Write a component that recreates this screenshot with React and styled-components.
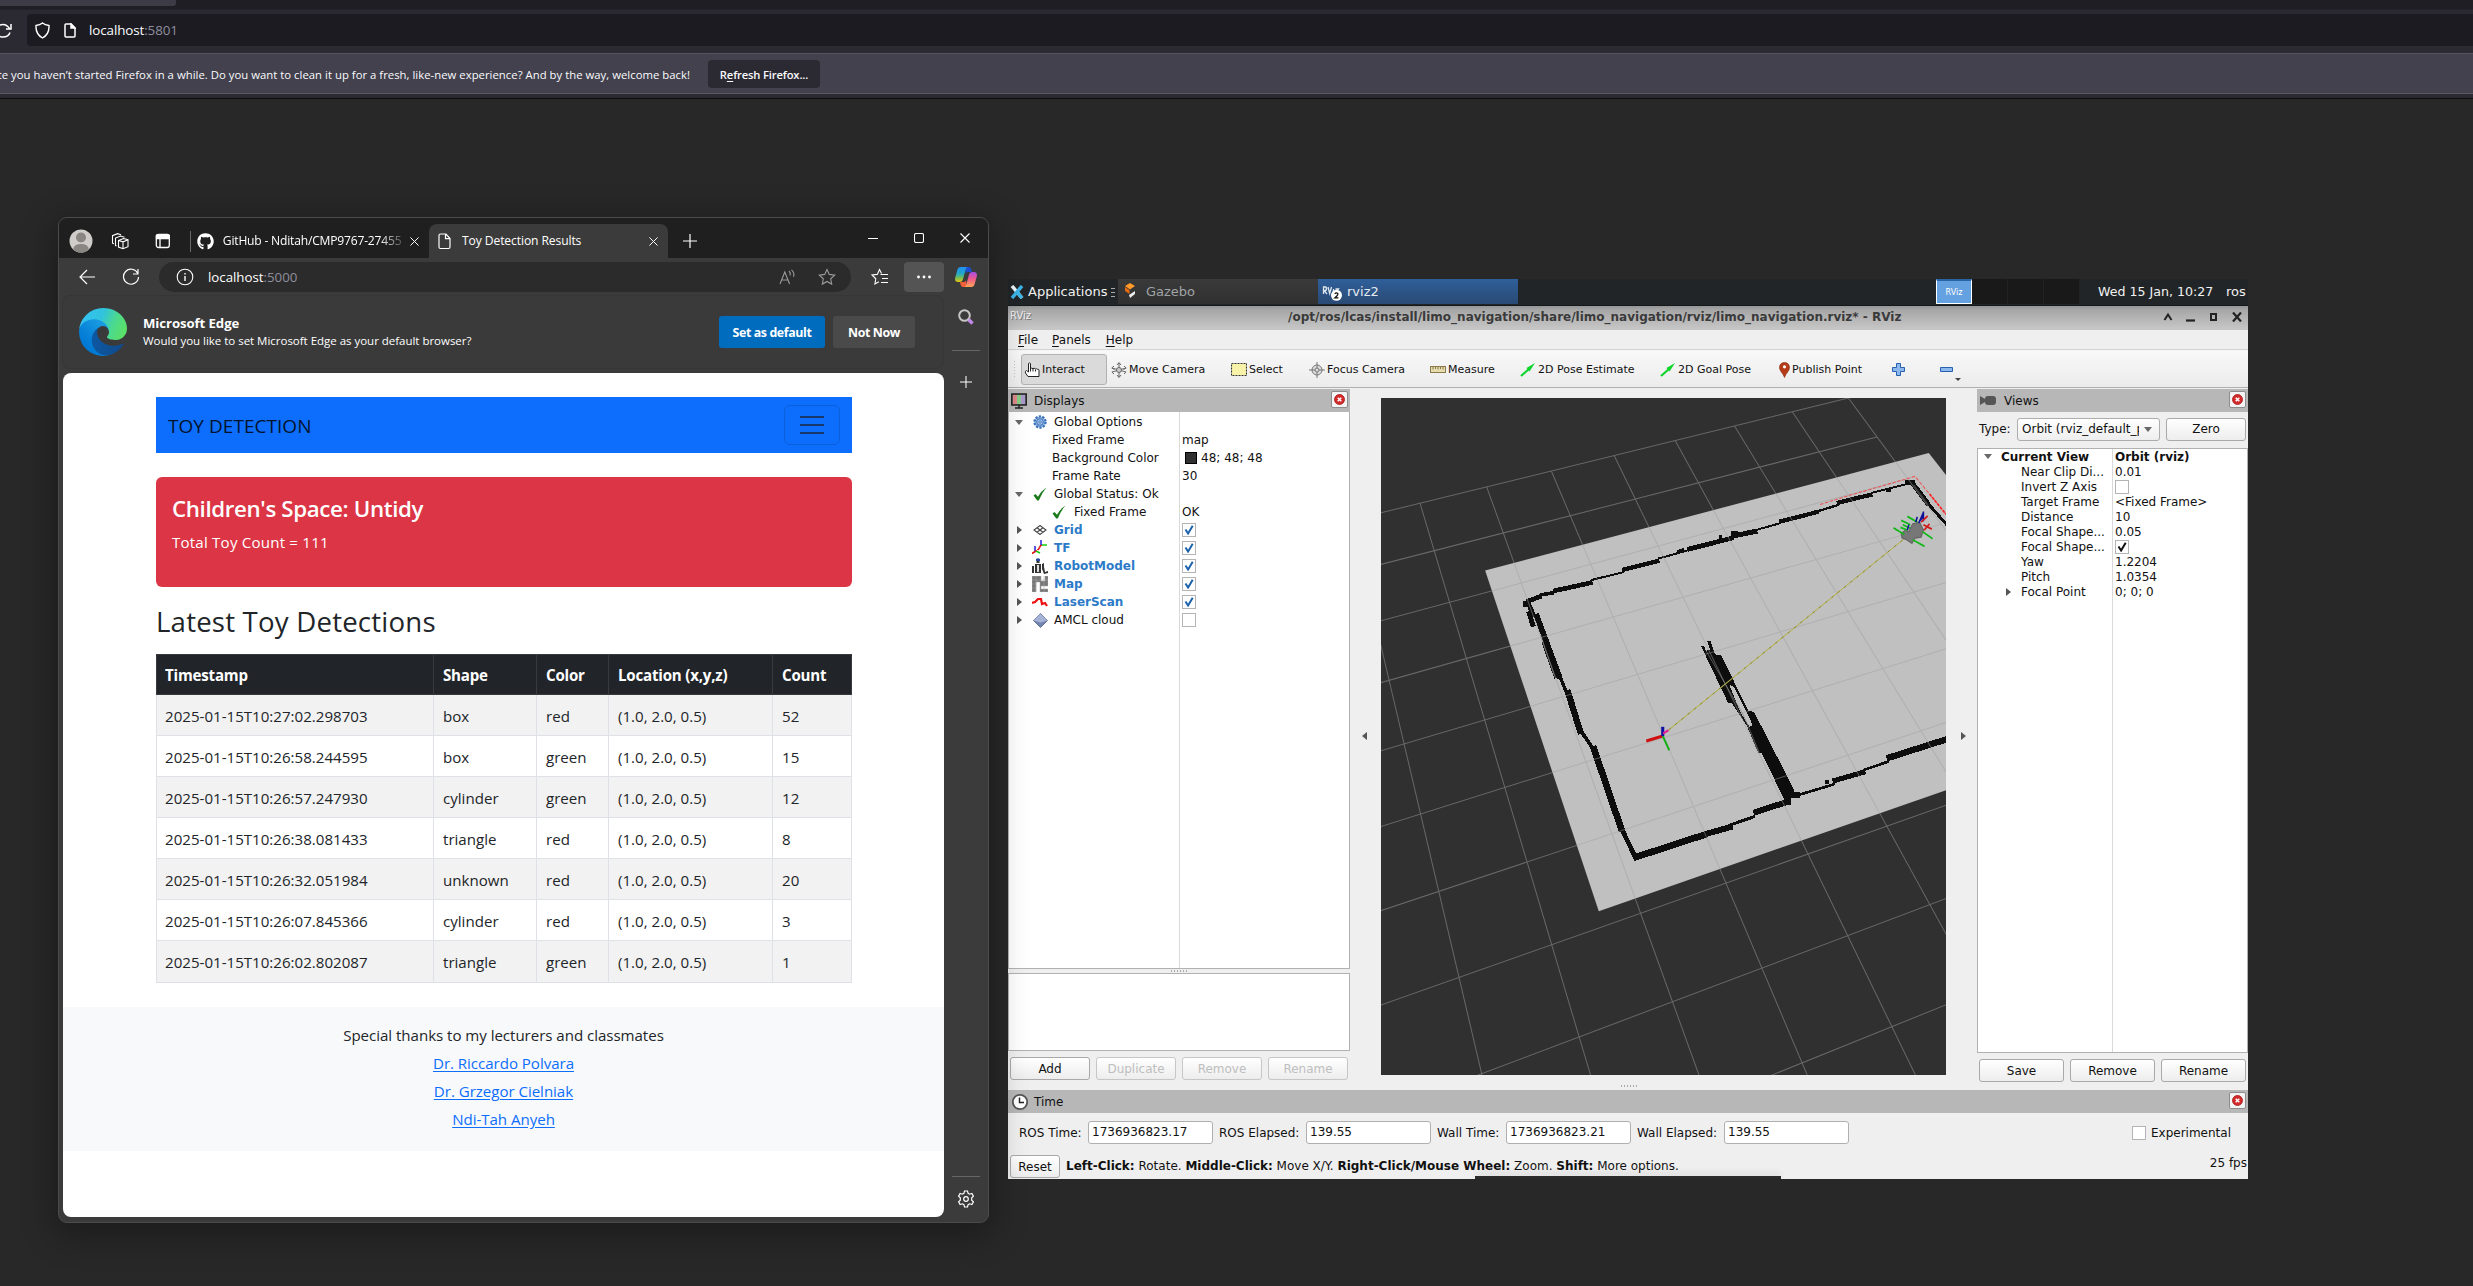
import React from "react";
import styled, { createGlobalStyle, css } from "styled-components";
import { FaGithub } from "react-icons/fa";

const UI = `"Open Sans", "Noto Sans", sans-serif`;
const DJV = `"DejaVu Sans", sans-serif`;

const Global = createGlobalStyle`
  * { box-sizing: border-box; }
  html, body { margin: 0; background: #282828; overflow: hidden; }
  body { font-family: ${UI}; }
  svg { display: block; flex: none; }
`;

/* ---------- Outer browser ---------- */
const Shell = styled.div`
  width: 2473px; height: 1286px; display: flex; flex-direction: column;
  background: #282828; overflow: hidden;
`;
const TabStrip = styled.div`
  height: 10px; flex: none; background: #1f1e25; border-bottom: 1px solid #24232b;
`;
const TabStub = styled.div`
  width: 176px; height: 6px; background: #3c3b46; border-radius: 0 0 3px 0;
`;
const FxBar = styled.div`
  height: 44px; flex: none; background: #2b2a33; border-bottom: 1px solid #55535f;
  display: flex; align-items: flex-start; padding-top: 4px;
`;
const FxReload = styled.div`width: 27px; padding-top: 9px;`;
const FxUrl = styled.div`
  flex: 1; height: 32px; background: #1c1b22; border-radius: 4px 0 0 4px;
  display: flex; align-items: center; padding-left: 8px; gap: 14px; color: #fbfbfe;
  font-size: 13.4px;
`;
const FxAddress = styled.span`margin-left: -1px; letter-spacing: -0.1px;`;
const Dim = styled.span`color: ${p => p.c || "#8f8f9d"};`;
const Notice = styled.div`
  height: 40px; flex: none; background: #42414d; border-bottom: 1px solid #5b5966;
  display: flex; align-items: center; color: #fbfbfe; font-size: 11.3px;
`;
const NoticeText = styled.div`
  width: 690px; display: flex; justify-content: flex-end; white-space: nowrap; margin-right: 18px;
  padding-top: 1px; letter-spacing: 0.03px;
`;
const NoticeButton = styled.div`
  width: 112px; height: 28px; border-radius: 4px; background: #2b2a33; font-weight: 600;
  display: flex; align-items: center; justify-content: center; font-size: 11.2px; white-space: pre;
  letter-spacing: -0.15px; padding-top: 1px;
`;
const Seam = styled.div`height: 5px; flex: none; background: #2b2a33; border-bottom: 1px solid #0c0c0d;`;
const Desktop = styled.div`position: relative; flex: 1;`;

/* ---------- Edge window ---------- */
const EdgeWin = styled.div`
  position: absolute; left: 58px; top: 118px; width: 931px; height: 1006px; z-index: 2;
  border: 1px solid #4b4b4b; border-radius: 9px; background: #3b3b3b; overflow: hidden;
  display: flex; flex-direction: column; color: #fff;
`;
const EdgeShadow = styled.div`
  position: absolute; left: 58px; top: 118px; width: 931px; height: 1006px; z-index: 1;
  border-radius: 9px; box-shadow: 0 8px 34px 4px rgba(0, 0, 0, 0.32);
`;
const EdgeTitle = styled.div`height: 40px; flex: none; background: #1f1f1f; display: flex; align-items: flex-end;`;
const EdgeTools = styled.div`
  width: 131px; height: 100%; display: flex; align-items: center; padding: 6px 0 0 10px; gap: 18px;
`;
const Layout = styled.div`margin-left: 8px;`;
const VRule = styled.div`width: 1px; height: 21px; background: #6a6a6a; margin-bottom: 6px;`;
const EdgeTab = styled.div`
  width: ${p => p.w}px; height: 34px; display: flex; align-items: center; padding-left: ${p => p.pl}px;
  gap: ${p => p.gap}px; font-size: 12.1px; white-space: nowrap;
  ${p => p.$active && css`background: #3b3b3b; border-radius: 8px 8px 0 0;`}
`;
const TabText = styled.div`
  width: ${p => p.w}px; overflow: hidden; letter-spacing: ${p => p.ls || 0}px; padding-bottom: 1px;
  ${p => p.$fade && css`mask-image: linear-gradient(90deg, #000 88%, rgba(0,0,0,0.25));`}
`;
const NewTab = styled.div`width: 182px; height: 34px; display: flex; align-items: center; padding-left: 15px;`;
const WinButtons = styled.div`height: 40px; display: flex; align-items: center;`;
const WinButton = styled.div`width: 46px; display: flex; justify-content: center;`;
const EdgeBar = styled.div`height: 37px; flex: none; display: flex; align-items: center;`;
const BarIcon = styled.div`width: ${p => p.w}px; padding-left: ${p => p.pl || 0}px; display: flex; justify-content: center; flex: none;`;
const EdgeUrl = styled.div`
  width: 693px; height: 30px; border-radius: 15px; background: #2b2b2b; display: flex; align-items: center;
  padding: 0 14px 0 17px; font-size: 13.3px;
`;
const UrlText = styled.div`flex: 1; padding-left: 14px; letter-spacing: -0.02px;`;
const MenuBtn = styled.div`
  width: 40px; height: 30px; border-radius: 4px; background: #545454;
  display: flex; align-items: center; justify-content: center;
`;
const EdgeMain = styled.div`flex: 1; display: flex; min-height: 0;`;
const EdgeLeft = styled.div`width: 885px; padding: 0 0 5px 4px; display: flex; flex-direction: column;`;
const EdgeSide = styled.div`
  flex: 1; display: flex; flex-direction: column; align-items: center; padding: 13px 0 14px;
`;
const SideRule = styled.div`width: 28px; height: 1px; background: #666; margin: ${p => p.m};`;
const Spacer = styled.div`flex: 1;`;
const InfoBar = styled.div`
  height: 74px; flex: none; margin: 0 0 4px -1px; border: 1px solid #363636; border-radius: 8px; background: #3a3a3a;
  display: flex; align-items: center; padding-left: 16px;
`;
const InfoText = styled.div`width: 592px; padding-left: 16px; font-size: 11.5px; line-height: 17px; letter-spacing: -0.02px;`;
const InfoTitle = styled.div`font-size: 13.2px; font-weight: 700; letter-spacing: -0.08px;`;
const InfoButton = styled.div`
  width: ${p => p.w}px; height: 32px; border-radius: 3px; background: ${p => p.bg}; font-size: 12.4px; font-weight: 700;
  display: flex; align-items: center; justify-content: center; margin-right: 8px; letter-spacing: -0.4px;
`;

/* ---------- Toy page ---------- */
const Page = styled.div`flex: 1; background: #fff; border-radius: 8px; color: #212529; font-size: 15.1px; padding-top: 24px; overflow: hidden;`;
const Container = styled.div`width: 696px; margin-left: 93px;`;
const Nav = styled.div`
  height: 56px; background: #0d6efd; display: flex; align-items: center; justify-content: space-between;
  padding: 0 12px; font-size: 19px; color: #03142e;
`;
const Brand = styled.span`padding-top: 1px; letter-spacing: 0.04px;`;
const Toggler = styled.div`
  width: 56px; height: 40px; border: 1px solid #0c5fdb; border-radius: 6px; display: flex;
  flex-direction: column; align-items: center; justify-content: center; gap: 6px;
`;
const Bar = styled.div`width: 24px; height: 2px; background: #17386b;`;
const Alert = styled.div`
  margin-top: 24px; height: 110px; border-radius: 6px; background: #dc3545; color: #fff; padding: 16px;
`;
const AlertTitle = styled.div`font-size: 22.3px; font-weight: 600; line-height: 30px; letter-spacing: -0.36px; padding-top: 1px;`;
const AlertText = styled.div`line-height: 24px; margin-top: 6px; letter-spacing: 0.2px;`;
const H3 = styled.div`margin: 17px 0 16px; font-size: 27.6px; font-weight: 500; line-height: 34px; letter-spacing: 0.2px;`;
const Table = styled.div`border: 1px solid #dee2e6; border-top: 0;`;
const TR = styled.div`
  display: grid; grid-template-columns: 277px 103px 72px 164px 1fr; height: 41px;
  background: ${p => (p.$odd ? "#f2f2f2" : "#fff")}; border-bottom: 1px solid #dee2e6;
  &:last-child { border-bottom: 0; }
  ${p => p.$head && css`
    background: #212529; color: #fff; font-weight: 700; margin: 0 -1px; height: 41px;
    border: 1px solid #373b3e; letter-spacing: -0.2px;
  `}
`;
const TD = styled.div`
  padding: ${p => (p.$head ? 0 : 1)}px 8px 0; display: flex; align-items: center;
  border-right: 1px solid ${p => (p.$head ? "#373b3e" : "#dee2e6")};
  & + & { padding-left: 9px; }
  &:last-child { border-right: 0; }
`;
const Footer = styled.div`
  margin-top: 24px; height: 144px; background: #f8f9fa; padding-top: 14px; display: flex; flex-direction: column;
  align-items: center; line-height: 28px; letter-spacing: -0.04px;
`;
const Link = styled.a`color: #0d6efd; text-decoration: underline; text-underline-offset: 2px;`;

/* ---------- RViz ---------- */
const Remote = styled.div`
  position: absolute; left: 1008px; top: 180px; width: 1240px; height: 900px; background: #efefef;
  display: flex; flex-direction: column; font-family: ${DJV}; font-size: 12px; color: #111; overflow: hidden;
`;
const TaskBar = styled.div`
  height: 27px; flex: none; background: #212527; display: flex; color: #f2f2f2; font-size: 13px; align-items: center;
  border-bottom: 1px solid #15191a; white-space: nowrap; padding-bottom: 1px;
`;
const AppMenu = styled.div`width: 110px; display: flex; align-items: center; padding-left: 2px; gap: 4px;`;
const Task = styled.div`
  width: 200px; height: 25px; display: flex; align-items: center; padding: 0 0 1px ${p => p.pl}px; gap: ${p => p.gap}px;
  color: ${p => p.c}; background: ${p => p.bg};
`;
const Pager = styled.div`margin-left: 418px; display: flex; height: 25px; background: #191919;`;
const Desk = styled.div`
  width: 36px; border-right: 1px solid #222; color: #fff; font-size: 8px; display: flex; align-items: center; justify-content: center;
  ${p => p.$on && css`background: #64a1e0; border: 1px solid #fff; border-top: 2px solid #2a63a8;`}
`;
const Clock = styled.div`width: 128px; margin-left: 18px; font-size: 12.6px;`;
const TitleBar = styled.div`
  height: 24px; flex: none; background: linear-gradient(#969696, #a6a6a6 15%, #c8c8c8); display: flex; align-items: center;
  font-weight: 700; color: #3a3a3a; padding: 0 6px 6px 2px; white-space: nowrap;
`;
const TitleText = styled.div`flex: 1; padding-left: 257px; padding-top: 3px;`;
const TitleIcon = styled.div`font-weight: 400; font-size: 10px; color: #eee; width: 21px; text-shadow: 1px 1px 0 #777;`;
const WinGlyphs = styled.div`display: flex; gap: 13px; padding-top: 3px;`;
const MenuBar = styled.div`
  height: 20px; flex: none; display: flex; gap: 14px; padding-left: 10px; align-items: center; border-bottom: 1px solid #d2d2d2;
`;
const MenuItem = styled.span`&:nth-child(3) { margin-left: 1px; }`;
const U = styled.span`text-decoration: underline; text-underline-offset: 2px;`;
const ToolBar = styled.div`
  height: 38px; flex: none; background: linear-gradient(#f8f8f8, #ececec); border-bottom: 1px solid #b0b0b0;
  display: flex; align-items: center; font-size: 11px; padding: 2px 0 0 5px;
`;
const Grip = styled.div`
  width: 8px; height: 17px; background: radial-gradient(circle, #c0c0c0 0.8px, transparent 1px) 0 0 / 3px 3px;
  background-clip: content-box; padding-right: 4px; margin-bottom: 2px;
`;
const Tool = styled.div`
  width: ${p => p.w}px; height: 31px; display: flex; align-items: ${p => (p.$low ? "flex-end" : "center")}; gap: 2px;
  padding: 0 0 ${p => (p.$low ? 4 : 0)}px 3px; white-space: nowrap;
  ${p => p.$on && css`background: #dadada; border: 1px solid #b2b2b2; border-radius: 3px; padding-left: 2px; margin-right: 1px;`}
`;
const Work = styled.div`height: 702px; flex: none; display: flex; padding-top: 1px;`;
const Dock = styled.div`width: ${p => p.w}px; display: flex; flex-direction: column;`;
const DockHead = styled.div`
  height: 23px; flex: none; background: #b7b7b7; display: flex; align-items: center; padding: 0 2px 0 3px; gap: ${p => p.gap || 7}px;
`;
const CloseBox = styled.div`
  width: 17px; height: 17px; border: 1px solid #8d8d8d; border-radius: 2px; background: #f4f4f4; margin: 0 0 3px auto;
  display: flex; align-items: center; justify-content: center;
`;
const Tree = styled.div`
  height: ${p => p.h}px; flex: none; background: linear-gradient(90deg, #fff ${p => p.split}px, #d9d9d9 ${p => p.split}px, #d9d9d9 ${p => p.split + 1}px, #fff ${p => p.split + 1}px);
  border: 1px solid #b1b1b1; ${p => p.$notop && "border-top: 0; padding-top: 1px;"}
`;
const Row = styled.div`display: grid; grid-template-columns: ${p => p.split}px 1fr; height: ${p => p.h}px; align-items: center; white-space: nowrap;`;
const Name = styled.div`
  display: flex; align-items: center; padding-left: ${p => p.pl}px; overflow: hidden;
  ${p => p.$bold && css`font-weight: 700;`} ${p => p.$blue && css`color: #2c7ac8; font-weight: 700;`}
`;
const Slot = styled.div`width: ${p => p.w}px; display: flex; justify-content: center; flex: none;`;
const Value = styled.div`display: flex; align-items: center; padding-left: 3px; ${p => p.$bold && "font-weight: 700;"}`;
const Check = styled.div`
  width: 14px; height: 14px; border: 1px solid #b4b4b4; background: #fff; display: flex; align-items: center; justify-content: center;
`;
const Swatch = styled.div`width: 12px; height: 12px; border: 1px solid #000; background: #303030; margin: 0 4px 0 3px;`;
const Blank = styled.div`height: 78px; border: 1px solid #b1b1b1; background: #fff;`;
const Dots = styled.div`
  height: 4px; width: 18px; margin: ${p => p.m || "0 auto"};
  background: radial-gradient(circle, #aaa 0.8px, transparent 1px) 0 0 / 3px 4px;
`;
const Buttons = styled.div`display: flex; gap: ${p => p.gap}px; padding: ${p => p.p};`;
const Btn = styled.div`
  width: ${p => p.w}px; height: 23px; border: 1px solid ${p => (p.$off ? "#c6c6c6" : "#a9a9a9")}; border-radius: 3px;
  background: linear-gradient(#fff, #ededed); color: ${p => (p.$off ? "#bebebe" : "#111")}; margin-right: ${p => p.mr || 0}px;
  display: flex; align-items: center; justify-content: center; flex: none;
`;
const Gutter = styled.div`width: ${p => p.w}px; display: flex; align-items: center; justify-content: center; padding: ${p => p.p};`;
const View = styled.div`width: 565px; padding-top: 9px; & > svg { background: #303030; }`;
const TypeRow = styled.div`height: 36px; display: flex; align-items: center; padding: 0 0 2px 2px;`;
const Combo = styled.div`
  width: 143px; height: 23px; border: 1px solid #adadad; border-radius: 3px; background: linear-gradient(#fff, #eee);
  display: flex; align-items: center; justify-content: space-between; padding: 0 7px 0 4px; margin: 0 6px 0 auto;
`;
const ComboText = styled.div`width: 117px; overflow: hidden; white-space: nowrap;`;
const TimeRow = styled.div`height: 40px; display: flex; align-items: center; padding: 0 17px 2px 11px; white-space: nowrap;`;
const Label = styled.div`width: ${p => p.w}px; padding-top: 2px;`;
const Field = styled.div`
  width: 125px; height: 23px; margin-right: 6px; border: 1px solid #b0b0b0; border-radius: 3px; background: #fff;
  display: flex; align-items: center; padding: 0 3px 1px;
`;
const Exp = styled.div`margin-left: auto; display: flex; align-items: center; gap: 5px; padding-top: 2px;`;
const StatusRow = styled.div`flex: 1; display: flex; align-items: flex-start; padding: 2px 1px 0 2px; white-space: nowrap;`;
const Hint = styled.div`flex: 1; padding: 4px 0 0 6px;`;
const Fps = styled.div`padding-top: 1px;`;
const Strip = styled.div`position: absolute; left: 467px; bottom: 0; width: 306px; height: 3px; background: #2a2a2a; box-shadow: 0 -3px 6px rgba(0,0,0,.12);`;

/* ---------- small drawings ---------- */
const Svg = ({ s = 16, w, h, vb, children, ...r }) => (
  <svg width={w || s} height={h || s} viewBox={vb || `0 0 ${w || s} ${h || s}`} fill="none" stroke="#fff" strokeWidth="1.1" {...r}>{children}</svg>
);
const XIcon = ({ s = 9, w = 1.1 }) => <Svg s={s} vb="0 0 10 10" strokeWidth={w}><path d="M.5.5l9 9M9.5.5l-9 9" /></Svg>;
const PlusIcon = ({ s = 14 }) => <Svg s={s} vb="0 0 14 14" strokeWidth="1.2"><path d="M7 0v14M0 7h14" /></Svg>;
const Down = () => <Svg w={8} h={5} stroke="none"><path d="M0 0h8L4 5z" fill="#686868" /></Svg>;
const Right = () => <Svg w={5} h={8} stroke="none"><path d="M0 0v8l5-4z" fill="#555" /></Svg>;
const Left = () => <Svg w={5} h={8} stroke="none"><path d="M5 0v8L0 4z" fill="#555" /></Svg>;
const Tick = ({ c = "#1c62ab" }) => <Svg s={10} stroke={c} strokeWidth="2"><path d="M1.5 4.5l2.6 4L8.7.8" /></Svg>;
const GreenTick = () => <Svg s={14} stroke="none" fill="#1b7a1b"><path d="M.500 8.500l2-1.500L5 9.800Q8 4 13.500 .500 9 5.500 5.800 13.500H4.200z" /></Svg>;
const Closer = () => (
  <CloseBox><Svg s={11} stroke="#fff" strokeWidth="1.5"><circle cx="5.5" cy="5.5" r="5" fill="#d42a2a" stroke="#a51515" strokeWidth=".8" /><path d="M3.7 3.7l3.6 3.6M7.3 3.7L3.7 7.3" /></Svg></CloseBox>
);
const EdgeLogo = () => (
  <svg width="48" height="48" viewBox="0 0 256 256">
    <defs>
      <linearGradient id="e1" x1="63" y1="178" x2="242" y2="178" gradientUnits="userSpaceOnUse"><stop stopColor="#0c59a4" /><stop offset="1" stopColor="#114a8b" /></linearGradient>
      <linearGradient id="e2" x1="157" y1="100" x2="46" y2="221" gradientUnits="userSpaceOnUse"><stop stopColor="#1b9de2" /><stop offset=".2" stopColor="#1595df" /><stop offset=".7" stopColor="#0680d7" /><stop offset="1" stopColor="#0078d4" /></linearGradient>
      <linearGradient id="e3" x1="20" y1="60" x2="240" y2="150" gradientUnits="userSpaceOnUse"><stop stopColor="#35c1f1" /><stop offset=".4" stopColor="#30c3dd" /><stop offset=".7" stopColor="#4bd990" /><stop offset="1" stopColor="#5be067" /></linearGradient>
    </defs>
    <g transform="translate(-4.63 -4.92)">
      <path fill="url(#e1)" d="M235.68 195.46a93.73 93.73 0 0 1-10.54 4.71 101.87 101.87 0 0 1-35.9 6.46c-47.32 0-88.54-32.55-88.54-74.32A31.48 31.48 0 0 1 117.13 105c-42.8 1.8-53.8 46.4-53.8 72.53 0 73.88 68.09 81.37 82.76 81.37 7.91 0 19.84-2.3 27-4.56l1.31-.44a128.34 128.34 0 0 0 66.6-52.8 4 4 0 0 0-5.32-5.64Z" />
      <path fill="url(#e2)" d="M110.34 246.34A79.2 79.2 0 0 1 87.6 225a80.72 80.72 0 0 1 29.53-120c3.12-1.47 8.45-4.13 15.54-4a32.35 32.35 0 0 1 25.69 13 31.88 31.88 0 0 1 6.36 18.66c0-.21 24.46-79.6-80-79.6-43.9 0-80 41.66-80 78.21a130.15 130.15 0 0 0 12.11 56 128 128 0 0 0 156.38 67.11 75.55 75.55 0 0 1-62.78-8Z" />
      <path fill="url(#e3)" d="M156.94 153.78c-.81 1.05-3.3 2.5-3.3 5.66 0 2.61 1.7 5.12 4.72 7.23 14.38 10 41.49 8.68 41.56 8.68a59.56 59.56 0 0 0 30.27-8.35 61.38 61.38 0 0 0 30.43-52.88c.26-22.41-8-37.31-11.34-43.91-21.19-41.44-66.92-65.28-116.65-65.28a128 128 0 0 0-128 126.2c.48-36.54 36.8-66.05 80-66.05 3.5 0 23.46.34 42 10.07 16.34 8.58 24.9 18.94 30.85 29.21 6.18 10.67 7.28 24.15 7.28 29.52s-2.74 13.33-7.8 19.9Z" />
    </g>
  </svg>
);
const Copilot = () => (
  <svg width="22" height="20" viewBox="0 0 22 20">
    <defs>
      <linearGradient id="c1" x1="0" y1="0" x2="0" y2="1"><stop stopColor="#1f8ff0" /><stop offset=".45" stopColor="#23a9c8" /><stop offset=".75" stopColor="#7cc04a" /><stop offset="1" stopColor="#f0c414" /></linearGradient>
      <linearGradient id="c2" x1="0" y1="0" x2="0" y2="1"><stop stopColor="#a44fe8" /><stop offset=".45" stopColor="#f0588e" /><stop offset="1" stopColor="#ffa654" /></linearGradient>
    </defs>
    <path fill="#1b4fd0" d="M10 0h3.4c1.6 0 2.4.8 2.8 2.2L17 5h-3.8c-1.2 0-1.9.6-2.3 1.8z" />
    <path fill="#f2603a" d="M12 20H8.200c-1.400 0-2.100-.8-2.500-2.200L5 15h3.800c1.200 0 1.800-.6 2.200-1.800z" />
    <path fill="url(#c1)" d="M5.600 0H13c-1.300.2-2 1.200-2.400 2.700L8 12.200C7.400 14 6.300 15 4.600 15H3C.700 15-.4 13.200.2 10.800L2.300 3C2.900 1 4 0 5.600 0z" />
    <path fill="url(#c2)" d="M16.400 20H9c1.300-.2 2-1.200 2.400-2.700L14 7.800C14.600 6 15.700 5 17.400 5H19c2.300 0 3.400 1.800 2.800 4.200L19.700 17c-.6 2-1.700 3-3.300 3z" />
  </svg>
);

/* ---------- 3D scene ---------- */
function solve(src, dst) {
  const m = [];
  src.forEach(([x, y], k) => {
    const [u, v] = dst[k];
    m.push([x, y, 1, 0, 0, 0, -u * x, -u * y, u]);
    m.push([0, 0, 0, x, y, 1, -v * x, -v * y, v]);
  });
  for (let c = 0; c < 8; c++) {
    let p = c;
    for (let r = c + 1; r < 8; r++) if (Math.abs(m[r][c]) > Math.abs(m[p][c])) p = r;
    [m[c], m[p]] = [m[p], m[c]];
    for (let r = 0; r < 8; r++) {
      if (r === c) continue;
      const f = m[r][c] / m[c][c];
      for (let k = c; k < 9; k++) m[r][k] -= f * m[c][k];
    }
  }
  const h = m.map((row, k) => row[8] / row[k]);
  return (x, y) => {
    const w = h[6] * x + h[7] * y + 1;
    return [(h[0] * x + h[1] * y + h[2]) / w, (h[3] * x + h[4] * y + h[5]) / w];
  };
}
const project = solve([[3, 0], [10, 0], [2, 8], [7, 8]], [[131, 257], [1250, 18], [292, 1553], [1463, 1169]]);
const seg = (a, b) => `M${project(...a).join(" ")}L${project(...b).join(" ")}`;
const gridPath = Array.from({ length: 11 }, (_, i) => seg([i, 0], [i, 10]) + seg([0, i], [10, i])).join("");

/* x1, y1, x2, y2, thickness */
const walls = [
  [50, 425, 95, 408, 14], [90, 405, 132, 398, 11], [130, 393, 248, 367, 14], [244, 360, 342, 336, 6],
  [337, 330, 448, 302, 13], [444, 296, 537, 270, 6], [502, 276, 522, 269, 11], [533, 268, 672, 233, 14],
  [626, 231, 636, 231, 10], [664, 229, 742, 213, 15], [664, 218, 684, 218, 8], [738, 210, 812, 189, 6],
  [808, 185, 926, 155, 13], [922, 154, 987, 134, 7], [980, 129, 1087, 103, 13], [1083, 99, 1192, 72, 6],
  [1128, 91, 1142, 91, 8], [1184, 68, 1216, 66, 13],
  [1203, 64, 1256, 134, 15], [1250, 126, 1312, 196, 9],
  [40, 431, 62, 431, 18], [52, 422, 72, 470, 14], [56, 454, 70, 500, 15], [78, 462, 150, 655, 17],
  [98, 545, 137, 655, 8], [148, 645, 168, 694, 10], [172, 690, 213, 822, 19], [212, 812, 248, 864, 11],
  [249, 858, 336, 1113, 20], [334, 1104, 380, 1200, 14],
  [372, 1193, 590, 1122, 20], [580, 1124, 668, 1099, 18], [660, 1095, 735, 1069, 9], [730, 1058, 840, 1023, 18],
  [832, 1008, 832, 1036, 20], [845, 1004, 870, 1004, 19], [862, 1006, 974, 972, 8], [945, 966, 958, 966, 11],
  [968, 963, 1066, 935, 15], [1060, 930, 1137, 904, 8], [1130, 895, 1312, 837, 19],
];

const Scene = () => (
  <svg width="565" height="677" viewBox="29 18 1476 1538" preserveAspectRatio="none">
    <path d="M301 410L1460 143L1505 193V909L598 1184Z" fill="#c0c0c0" />
    <g transform="matrix(.8708 0 0 .7573 366 158.9)" shapeRendering="crispEdges">
      {walls.map(([a, b, c, d, w], k) => <path key={k} d={`M${a} ${b}L${c} ${d}`} stroke="#0d0d0d" strokeWidth={w} />)}
      <path fill="#0d0d0d" fillRule="evenodd" d="M573 558H582L588 572L600 570L592 544H602L612 576L620 586L632 584L665 650L715 752L732 756L758 806L822 930L852 990V1012L822 1018L792 955L755 880H745L712 800L665 728H654ZM658 675L672 680L712 760L728 795L718 800L690 755Z" />
    </g>
    <g transform="matrix(.8708 0 0 .7573 366 158.9)" fill="none">
      <path d="M92 525L134 650M588 572L700 765L748 878" stroke="#7a7a7a" strokeWidth="2" />
      <path d="M1212 75L1254 134" stroke="#666" strokeWidth="2" />
    </g>
    <path d={gridPath} stroke="#a0a0a4" strokeOpacity=".5" strokeWidth="1" vectorEffect="non-scaling-stroke" fill="none" />
    <g fill="none">
      <path d="M1176 260L1250 240L1424 196L1505 282" stroke="#f05050" strokeWidth="2.4" strokeDasharray="9 4" />
      <path d="M1462 236L1505 282" stroke="#f22" strokeWidth="4" strokeDasharray="7 3" />
      <path d="M765 783L1418 322" stroke="#b5b350" strokeWidth="2.300" />
      <path d="M765 783L1418 322" stroke="#7f7d2a" strokeWidth="2" strokeDasharray="6 14" />
      <path d="M722 797L765 786" stroke="#d01010" strokeWidth="7" />
      <path d="M765 786L782 818" stroke="#10b010" strokeWidth="5" />
      <path d="M765 786V765" stroke="#1010a0" strokeWidth="8" />
      <path d="M766 780L780 773" stroke="#e0209a" strokeWidth="5" />
      <path d="M1388 326L1400 318L1408 322L1418 304L1436 300L1446 318L1440 334L1424 336L1416 348L1402 340L1390 336Z" fill="#777" stroke="#666" strokeWidth="3" />
      <path d="M1368 313L1396 328M1418 340L1449 355M1444 322L1470 338M1388 296L1412 306M1404 287L1430 300M1386 312L1404 318M1392 306L1412 314" stroke="#10b818" strokeWidth="4" />
      <path d="M1426 300L1430 288M1434 302L1446 278M1438 296L1446 286M1404 318L1408 306M1446 276V298" stroke="#10109a" strokeWidth="4" />
      <path d="M1440 300L1457 286M1446 306L1468 316M1448 318L1462 304" stroke="#d01818" strokeWidth="4" />
    </g>
  </svg>
);

/* ---------- data ---------- */
const detections = [
  ["2025-01-15T10:27:02.298703", "box", "red", "(1.0, 2.0, 0.5)", "52"],
  ["2025-01-15T10:26:58.244595", "box", "green", "(1.0, 2.0, 0.5)", "15"],
  ["2025-01-15T10:26:57.247930", "cylinder", "green", "(1.0, 2.0, 0.5)", "12"],
  ["2025-01-15T10:26:38.081433", "triangle", "red", "(1.0, 2.0, 0.5)", "8"],
  ["2025-01-15T10:26:32.051984", "unknown", "red", "(1.0, 2.0, 0.5)", "20"],
  ["2025-01-15T10:26:07.845366", "cylinder", "red", "(1.0, 2.0, 0.5)", "3"],
  ["2025-01-15T10:26:02.802087", "triangle", "green", "(1.0, 2.0, 0.5)", "1"],
];

const HandI = () => <Svg s={16} stroke="#222" strokeWidth="1"><path d="M4.500 10V1.500q1-1.200 2 0V7q.5-1.400 2.500-.4 1-1 2.500.4 1-.6 2 .3.900-.3 1.500.6V14.500h-11L1.500 11q-.8-2 1-2.500L4.500 10M6.500 7v2.500M9 7v2.500M11.500 7.500v2" fill="#fff" /></Svg>;
const MoveI = () => <Svg s={16} stroke="#666" strokeWidth="1"><path d="M8 1v14M1 6l14 4M1 10l14-4M6 3l2-2.500L10 3M6 13l2 2.500L10 13M3 4L.8 6l2.700 1.500M13 4l2.200 2-2.700 1.500M3 12L.8 10M13 12l2.200-2" /><circle cx="8" cy="8" r="2.500" fill="#ccc" /></Svg>;
const SelectI = () => <Svg w={16} h={14} stroke="#333" strokeDasharray="2 1"><rect x=".5" y=".5" width="15" height="12" fill="#f8f3a8" /></Svg>;
const FocusI = () => <Svg s={16} stroke="#777" strokeWidth="1"><circle cx="8" cy="8" r="5" fill="#ddd" /><circle cx="8" cy="8" r="2" /><path d="M8 0v6M8 10v6M0 8h6M10 8h6" /></Svg>;
const RulerI = () => <Svg w={16} h={7} stroke="#8a7a4a" strokeWidth="1"><rect x=".5" y=".5" width="15" height="6" fill="#e6dcae" /><path d="M3 1v2.500M5.500 1v2M8 1v2.500M10.500 1v2M13 1v2.500" /></Svg>;
const ArrowI = () => <Svg s={16} stroke="#0bd52b" strokeWidth="2.200"><path d="M1 14L9 7" /><path d="M15 1L6.500 6l3 3.500z" fill="#0bd52b" stroke="none" /></Svg>;
const PinI = () => <Svg w={11} h={16} stroke="#8a2a10" strokeWidth=".6"><path d="M5.500.5C2 .5.500 3 .500 5.500.500 9 4 11 5.500 15.500 7 11 10.500 9 10.500 5.500 10.500 3 9 .5 5.500.5z" fill="#b43c18" /><circle cx="5.500" cy="4.800" r="1.600" fill="#fff" stroke="none" /></Svg>;
const GearI = () => <Svg s={14} stroke="#3a6fb5" strokeWidth="1"><circle cx="7" cy="7" r="5.600" strokeDasharray="2.200 1.300" fill="#8db4e6" strokeWidth="2.200" /><circle cx="7" cy="7" r="3.300" fill="#a9c8f0" /><circle cx="7" cy="7" r="1.200" fill="#fff" /></Svg>;
const GridI = () => <Svg w={14} h={10} stroke="#444" strokeWidth="1.100"><path d="M7 .5L13 5 7 9.500 1 5zM4 2.700l6 4.600M10 2.700L4 7.300" /></Svg>;
const TFI = () => <Svg s={16} strokeWidth="1.500"><path d="M9 5h6" stroke="#1c1" /><path d="M9 5V0M3 11V6" stroke="#22d" /><path d="M9 5L6 10M4 11l-4 2.500" stroke="#d11" /><path d="M4 11l4 2" stroke="#1c1" /><path d="M10 5L4 11" stroke="#e33" strokeWidth="1" /></Svg>;
const RobotI = () => <Svg s={16} stroke="none" fill="#333"><path d="M4 1q2-1.500 4 0v2H4z" fill="#2b49a0" /><path d="M4.500 3h3v2h-3zM3 6h6v9H3zM0 8h2v7H0zM10 6l2-1v4l1 5 3-1v2l-4 1-2-5z" /><path d="M5 7h2v7H5z" fill="#ddd" /></Svg>;
const MapI = () => <Svg s={16} stroke="#aaa" strokeWidth=".5"><path d="M0 0h9v5h4V0h3v10H9v3h7v3H8V6H4v10H0z" fill="#777" /><path d="M0 4h16M0 8h5M0 12h4M4 0v16M12 0v16" /></Svg>;
const LaserI = () => <Svg w={16} h={11} stroke="#e11" strokeWidth="2.200"><path d="M0 6l3-1 3-3h3l1 5 3-1 2 3" /></Svg>;
const CloudI = () => <Svg s={15} stroke="#4a5a80" strokeWidth=".8"><path d="M7.500.5l7 7-7 7-7-7z" fill="#7484b0" /><path d="M7.500.5l7 7-7 2-7-2z" fill="#a6b3d6" stroke="none" /></Svg>;

const displays = [
  { a: "d", i: GearI, n: "Global Options" },
  { pl: 43, n: "Fixed Frame", v: "map" },
  { pl: 43, n: "Background Color", v: "48; 48; 48", sw: true },
  { pl: 43, n: "Frame Rate", v: "30" },
  { a: "d", i: GreenTick, n: "Global Status: Ok" },
  { pl: 41, i: GreenTick, n: "Fixed Frame", v: "OK" },
  { a: "r", i: GridI, n: "Grid", on: true, blue: true },
  { a: "r", i: TFI, n: "TF", on: true, blue: true },
  { a: "r", i: RobotI, n: "RobotModel", on: true, blue: true },
  { a: "r", i: MapI, n: "Map", on: true, blue: true },
  { a: "r", i: LaserI, n: "LaserScan", on: true, blue: true },
  { a: "r", i: CloudI, n: "AMCL cloud", on: false },
];
const views = [
  ["Near Clip Di...", "0.01"], ["Invert Z Axis", false], ["Target Frame", "<Fixed Frame>"], ["Distance", "10"],
  ["Focal Shape...", "0.05"], ["Focal Shape...", true], ["Yaw", "1.2204"], ["Pitch", "1.0354"],
];
const tools = [
  [86, HandI, "Interact"], [120, MoveI, "Move Camera"], [78, SelectI, "Select"], [121, FocusI, "Focus Camera"],
  [90, RulerI, "Measure"], [140, ArrowI, "2D Pose Estimate"], [119, ArrowI, "2D Goal Pose"], [113, PinI, "Publish Point"],
];

const Edge = () => (
  <EdgeWin>
    <EdgeTitle>
      <EdgeTools>
        <Svg s={24} stroke="none"><circle cx="12" cy="12" r="11.500" fill="#cfcdca" /><circle cx="12" cy="8.500" r="5" fill="#8a8783" /><path d="M4 20.300q1-5.300 8-5.300t8 5.300A11.500 11.500 0 0 1 4 20.300z" fill="#8a8783" /></Svg>
        <Svg w={18} h={18}><path d="M7.500 8.500l5-2 4.500 1.200v7l-5 2-4.500-1.700zM7.500 8.500l4.500 1.300 5-2.100M12 9.800v6.900M5.500 14l-1-.5V6l5-2 4 1.200M3 11.700l-1.500-.5v-7.500l5-2 3.500 1" /></Svg>
        <Layout><Svg w={16} h={16} strokeWidth="1.300"><rect x="1.300" y="1.500" width="13" height="13" rx="2.200" /><path d="M1.500 2.500h12.700v3H1.500z" fill="#fff" /><path d="M5 5v9" /></Svg></Layout>
      </EdgeTools>
      <VRule />
      <EdgeTab w={238} pl={6} gap={9}>
        <FaGithub size={17} color="#fff" />
        <TabText w={178} $fade ls={-0.2}>GitHub - Nditah/CMP9767-27455</TabText>
        <XIcon s={9} />
      </EdgeTab>
      <EdgeTab w={240} pl={9} gap={11.500} $active>
        <Svg w={13} h={17} strokeWidth="1.200"><path d="M1 2.500Q1 1 2.500 1H8l4 4.500V14q0 1.500-1.500 1.500h-8Q1 15.500 1 14zM7.500 1v4.700H12" /></Svg>
        <TabText w={175} ls={-0.1}>Toy Detection Results</TabText>
        <XIcon s={9} />
      </EdgeTab>
      <NewTab><PlusIcon s={14} /></NewTab>
      <WinButtons>
        <WinButton><Svg w={10} h={10}><path d="M0 5.500h10" /></Svg></WinButton>
        <WinButton><Svg w={10} h={10}><rect x=".5" y=".5" width="9" height="9" rx="1.500" /></Svg></WinButton>
        <WinButton><XIcon s={10} /></WinButton>
      </WinButtons>
    </EdgeTitle>
    <EdgeBar>
      <BarIcon w={56}><Svg w={16} h={16} strokeWidth="1.200"><path d="M16 8H1M8 1L1 8l7 7" /></Svg></BarIcon>
      <BarIcon w={32}><Svg w={18} h={18} strokeWidth="1.200"><path d="M15.800 5.500A7.500 7.500 0 1 0 16.500 9M16 1v5h-5" /></Svg></BarIcon>
      <BarIcon w={12} />
      <EdgeUrl>
        <Svg s={18}><circle cx="9" cy="9" r="7.800" /><path d="M9 8v5M9 5v1.500" strokeWidth="1.400" /></Svg>
        <UrlText>localhost<Dim>:5000</Dim></UrlText>
        <BarIcon w={20}><Svg w={17} h={16} stroke="#9a9a9a"><path d="M1 15L5.800 3l4.800 12M2.500 11h6.500M10 2q2 2 1 4.500M12.500.8q3.500 3 2 7" /></Svg></BarIcon>
        <BarIcon w={30} />
        <BarIcon w={0}><Svg s={18} stroke="#9a9a9a"><path d="M9 1.500l2.300 4.900 5.400.7-4 3.700 1 5.300L9 13.500l-4.700 2.600 1-5.300-4-3.700 5.400-.7z" /></Svg></BarIcon>
        <BarIcon w={10} />
      </EdgeUrl>
      <BarIcon w={53} pl={5}><Svg s={18}><path d="M10.500 5.600L8.500 1.500 6.300 6.400l-5.300.6 3.800 3.800-.9 5.200 4-2.200M9.500 6.500H17M11 10.500h6M10 14.500h7" /></Svg></BarIcon>
      <MenuBtn><Svg w={16} h={4} stroke="none" fill="#fff"><circle cx="2.500" cy="2" r="1.400" /><circle cx="8" cy="2" r="1.400" /><circle cx="13.500" cy="2" r="1.400" /></Svg></MenuBtn>
      <BarIcon w={44}><Copilot /></BarIcon>
    </EdgeBar>
    <EdgeMain>
      <EdgeLeft>
        <InfoBar>
          <EdgeLogo />
          <InfoText><InfoTitle>Microsoft Edge</InfoTitle>Would you like to set Microsoft Edge as your default browser?</InfoText>
          <InfoButton w={106} bg="#006cbe">Set as default</InfoButton>
          <InfoButton w={82} bg="#4a4a4a">Not Now</InfoButton>
        </InfoBar>
        <Page>
          <Container>
            <Nav><Brand>TOY DETECTION</Brand><Toggler><Bar /><Bar /><Bar /></Toggler></Nav>
            <Alert><AlertTitle>Children's Space: Untidy</AlertTitle><AlertText>Total Toy Count = 111</AlertText></Alert>
            <H3>Latest Toy Detections</H3>
            <Table>
              <TR $head>{["Timestamp", "Shape", "Color", "Location (x,y,z)", "Count"].map(t => <TD $head key={t}>{t}</TD>)}</TR>
              {detections.map((d, i) => <TR key={d[0]} $odd={i % 2 === 0}>{d.map((t, k) => <TD key={k}>{t}</TD>)}</TR>)}
            </Table>
          </Container>
          <Footer>
            <span>Special thanks to my lecturers and classmates</span>
            <Link>Dr. Riccardo Polvara</Link><Link>Dr. Grzegor Cielniak</Link><Link>Ndi-Tah Anyeh</Link>
          </Footer>
        </Page>
      </EdgeLeft>
      <EdgeSide>
        <Svg s={18} strokeWidth="2"><circle cx="7.500" cy="7.500" r="5.300" stroke="#c8c6c4" /><path d="M11.500 11.500l4 4" stroke="#c08ae8" strokeWidth="3.600" /></Svg>
        <SideRule m="24px 0 25px" />
        <PlusIcon s={12} />
        <Spacer />
        <SideRule m="0 0 13px" />
        <Svg s={18} strokeWidth="1.200"><path d="M7.500 1h3l.6 2.300 1.500.9 2.300-.7 1.500 2.600-1.700 1.700v2.400l1.700 1.700-1.500 2.600-2.300-.7-1.500.9-.6 2.300h-3l-.6-2.300-1.500-.9-2.300.7L1.600 11.900l1.700-1.700V7.800L1.600 6.100l1.500-2.600 2.300.7 1.500-.9z" /><circle cx="9" cy="9" r="2.300" /></Svg>
      </EdgeSide>
    </EdgeMain>
  </EdgeWin>
);

const RViz = () => (
  <Remote>
    <TaskBar>
      <AppMenu>
        <Svg s={14} strokeWidth="3.500"><path d="M2 1l10 12" stroke="#e8f6fc" /><path d="M12 1L2 13" stroke="#3cb4e8" /><path d="M7 7l5 6" stroke="#3cb4e8" /></Svg>
        Applications
        <Svg w={4} h={10} stroke="#aaa" strokeWidth="1"><path d="M0 1.500h4M0 5.500h4M0 9.500h4" /></Svg>
      </AppMenu>
      <Task pl={6} gap={10} c="#a0a4a6" bg="linear-gradient(#3a3a3a,#303030)">
        <Svg w={12} h={16} stroke="none"><path d="M6 0l5 3-5 3.500L1 3z" fill="#ff9a2a" /><path d="M1 4l4.500 3v4L1 8z" fill="#e06a10" /><path d="M5 12l6-4v3l-5 4z" fill="#eee" /></Svg>
        Gazebo
      </Task>
      <Task pl={4} gap={4} c="#e6ebf0" bg="linear-gradient(#2f5f9a,#2a4a74)">
        <Svg w={21} h={20} stroke="#dfe6ee" strokeWidth="1.300"><path d="M1.500 13V6h2.300q1.500 1.800 0 3.500H2l3 3.500M6 6l1.700 6.500L9.500 6M11.500 8v4M13.500 8h3l-3 4h3" /><circle cx="14.500" cy="14.300" r="5.500" fill="#fff" stroke="none" /><path d="M12.800 12.800q1.600-2 3.200 0 0 1.500-3 4h3.400" stroke="#111" /></Svg>
        rviz2
      </Task>
      <Pager><Desk $on>RViz</Desk><Desk /><Desk /><Desk /></Pager>
      <Clock>Wed 15 Jan, 10:27</Clock><span>ros</span>
    </TaskBar>
    <TitleBar>
      <TitleIcon>RViz</TitleIcon>
      <TitleText>/opt/ros/lcas/install/limo_navigation/share/limo_navigation/rviz/limo_navigation.rviz* - RViz</TitleText>
      <WinGlyphs>
        <Svg s={10} stroke="#222" strokeWidth="2"><path d="M1.500 8L5 2.500 8.500 8" /></Svg>
        <Svg s={10} stroke="#222" strokeWidth="2.200"><path d="M0 8.500h9" /></Svg>
        <Svg s={10} stroke="#222" strokeWidth="2"><rect x="2" y="2" width="5" height="6" /></Svg>
        <Svg s={10} stroke="#222" strokeWidth="2.200"><path d="M1 .5l8 9M9 .5l-8 9" /></Svg>
      </WinGlyphs>
    </TitleBar>
    <MenuBar><MenuItem><U>F</U>ile</MenuItem><MenuItem><U>P</U>anels</MenuItem><MenuItem><U>H</U>elp</MenuItem></MenuBar>
    <ToolBar>
      <Grip />
      {tools.map(([w, I, t], k) => <Tool key={t} w={w} $on={k === 0}><I />{t}</Tool>)}
      <Tool w={48}><Svg s={13} stroke="#2860b0" strokeWidth="1"><path d="M4.500.5h4v4h4v4h-4v4h-4v-4h-4v-4h4z" fill="#8db8ee" /></Svg></Tool>
      <Tool w={15}><Svg w={13} h={5} stroke="#2860b0" strokeWidth="1"><path d="M.5.5h12v4H.5z" fill="#8db8ee" /></Svg></Tool>
      <Tool w={20} $low><Svg w={6} h={3} stroke="none"><path d="M0 0h6L3 3z" fill="#444" /></Svg></Tool>
    </ToolBar>
    <Work>
      <Dock w={342}>
        <DockHead><Svg w={16} h={16} strokeWidth="1.500"><rect x=".8" y="1" width="14.400" height="11" fill="#888" stroke="#222" /><path d="M2 2h4v9H2z" fill="#d88" stroke="none" /><path d="M6 2h4v9H6z" fill="#8c8" stroke="none" /><path d="M10 2h4v9h-4z" fill="#a9c" stroke="none" /><path d="M8 12v3M4 15h8" stroke="#222" /></Svg>Displays<Closer /></DockHead>
        <Tree h={557} split={170} $notop>
          {displays.map((d, k) => (
            <Row key={k} split={170} h={18}>
              <Name pl={d.pl || 0} $blue={d.blue}>
                {!d.pl && <Slot w={20}>{d.a === "d" ? <Down /> : <Right />}</Slot>}
                {d.i && <Slot w={d.pl ? 18 : 22}><d.i /></Slot>}
                {d.i && <Slot w={d.pl ? 6 : 3} />}
                {d.n}
              </Name>
              <Value>{d.sw && <Swatch />}{d.v}{d.on !== undefined && <Check>{d.on && <Tick />}</Check>}</Value>
            </Row>
          ))}
        </Tree>
        <Dots />
        <Blank />
        <Buttons gap={6} p="6px 0 0 2px"><Btn w={80}>Add</Btn><Btn w={80} $off>Duplicate</Btn><Btn w={80} $off>Remove</Btn><Btn w={80} $off>Rename</Btn></Buttons>
      </Dock>
      <Gutter w={31} p="0 2px 7px 0"><Left /></Gutter>
      <View><Scene /><Dots m="9px 0 0 239px" /></View>
      <Gutter w={31} p="0 0 7px 3px"><Right /></Gutter>
      <Dock w={271}>
        <DockHead gap={8}><Svg w={16} h={9} stroke="none" fill="#555"><path d="M0 0l5 3v3L0 9z" /><rect x="5" width="11" height="9" rx="3" /></Svg>Views<Closer /></DockHead>
        <TypeRow>Type:<Combo><ComboText>Orbit (rviz_default_plugins)</ComboText><Down /></Combo><Btn w={80} mr={2}>Zero</Btn></TypeRow>
        <Tree h={605} split={134}>
          <Row split={134} h={15}><Name pl={6} $bold><Slot w={8}><Down /></Slot><Slot w={9} />Current View</Name><Value $bold>Orbit (rviz)</Value></Row>
          {views.map(([n, v], k) => (
            <Row key={k} split={134} h={15}><Name pl={43}>{n}</Name><Value>{typeof v === "string" ? v : <Check>{v && <Tick c="#111" />}</Check>}</Value></Row>
          ))}
          <Row split={134} h={15}><Name pl={25}><Slot w={10}><Right /></Slot><Slot w={8} />Focal Point</Name><Value>0; 0; 0</Value></Row>
        </Tree>
        <Buttons gap={6} p="6px 0 0 2px"><Btn w={85}>Save</Btn><Btn w={85}>Remove</Btn><Btn w={85}>Rename</Btn></Buttons>
      </Dock>
    </Work>
    <DockHead gap={5}><Svg s={18} stroke="#444"><circle cx="9" cy="9" r="7.200" fill="#fff" strokeWidth="1.800" stroke="#555" /><path d="M8.500 4.500V9.500H13" strokeWidth="1.400" stroke="#222" /></Svg><span>Time</span><Closer /></DockHead>
    <TimeRow>
      <Label w={69}>ROS Time:</Label><Field>1736936823.17</Field>
      <Label w={87}>ROS Elapsed:</Label><Field>139.55</Field>
      <Label w={69}>Wall Time:</Label><Field>1736936823.21</Field>
      <Label w={87}>Wall Elapsed:</Label><Field>139.55</Field>
      <Exp><Check />Experimental</Exp>
    </TimeRow>
    <StatusRow>
      <Btn w={50}>Reset</Btn>
      <Hint><b>Left-Click:</b> Rotate. <b>Middle-Click:</b> Move X/Y. <b>Right-Click/Mouse Wheel:</b> Zoom. <b>Shift:</b> More options.</Hint>
      <Fps>25 fps</Fps>
    </StatusRow>
    <Strip />
  </Remote>
);

export default function App() {
  return (
    <Shell>
      <Global />
      <TabStrip><TabStub /></TabStrip>
      <FxBar>
        <FxReload><Svg w={12} h={16} strokeWidth="1.500"><path d="M-2 3Q5-1 9.500 5.500M11 1v5H6M10 9.500Q8.500 14 3 14q-2 0-4-1" /></Svg></FxReload>
        <FxUrl>
          <Svg w={15} h={17} strokeWidth="1.400"><path d="M7.500 1Q10 3 14 3.500 14.500 12 7.500 16 .5 12 1 3.500 5 3 7.500 1z" /></Svg>
          <Svg w={12} h={15} strokeWidth="1.500"><path d="M1 2Q1 1 2 1h5l4 4v8q0 1-1 1H2q-1 0-1-1z" /><path d="M7 1v4h4z" fill="#fff" /></Svg>
          <FxAddress>localhost<Dim>:5801</Dim></FxAddress>
        </FxUrl>
      </FxBar>
      <Notice>
        <NoticeText>te you haven’t started Firefox in a while. Do you want to clean it up for a fresh, like-new experience? And by the way, welcome back!</NoticeText>
        <NoticeButton>R<U>e</U>fresh Firefox...</NoticeButton>
      </Notice>
      <Seam />
      <Desktop>
        <RViz />
        <EdgeShadow />
        <Edge />
      </Desktop>
    </Shell>
  );
}
